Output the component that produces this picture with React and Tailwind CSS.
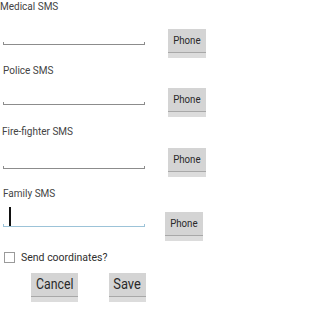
const font = { fontFamily: "Roboto, 'Noto Sans', sans-serif" };

const HoloButton = ({ label, className = "", textClass = "text-[10px]" }) => (
  <div className={`flex flex-col bg-[#d4d4d4] ${className}`}>
    <div className="flex flex-1 items-center justify-center">
      <span className={`inline-block text-[#2a2a2a] ${textClass}`}>{label}</span>
    </div>
    <div className="h-px bg-[#a8a8a8]" />
    <div className="h-[5px] bg-[#dcdcdc]" />
  </div>
);

const Underline = ({ focused }) => {
  const c = focused ? "bg-[#9cc3d8]" : "bg-[#8c8c8c]";
  return (
    <div className="flex h-[3px] w-[142px] items-end">
      <div className={`h-[3px] w-px ${c}`} />
      <div className={`h-px flex-1 ${c}`} />
      <div className={`h-[3px] w-px ${c}`} />
    </div>
  );
};

const Label = ({ children, className = "" }) => (
  <div className={`h-[14px] text-[10px] leading-[14px] text-[#444] ${className}`}>
    {children}
  </div>
);

export default function App() {
  return (
    <div className="h-[310px] w-[207px] overflow-hidden bg-white" style={font}>
      <Label className="pl-0">Medical SMS</Label>
      <div className="mt-[15px] flex h-[29px] items-start pl-[3px] pr-[1px]">
        <div className="mt-[13px]">
          <Underline />
        </div>
        <HoloButton label="Phone" className="ml-auto h-[29px] w-[38px]" textClass="text-[10.5px] scale-x-[0.92]" />
      </div>

      <Label className="mt-[6px] pl-[3px]">Police SMS</Label>
      <div className="mt-[10px] flex h-[29px] items-start pl-[3px] pr-[1px]">
        <div className="mt-[14px]">
          <Underline />
        </div>
        <HoloButton label="Phone" className="ml-auto h-[29px] w-[38px]" textClass="text-[10.5px] scale-x-[0.92]" />
      </div>

      <Label className="mt-[8px] pl-[2px]">Fire-fighter SMS</Label>
      <div className="mt-[9px] flex h-[29px] items-start pl-[3px] pr-[1px]">
        <div className="mt-[18px]">
          <Underline />
        </div>
        <HoloButton label="Phone" className="ml-auto h-[29px] w-[38px]" textClass="text-[10.5px] scale-x-[0.92]" />
      </div>

      <Label className="mt-[10px] pl-[3px]">Family SMS</Label>
      <div className="mt-[7px] flex h-[33px] items-start pl-[3px] pr-[4px]">
        <div className="relative mt-[16px]">
          <div className="absolute left-[6px] top-[-17px] h-[19px] w-[2px] bg-[#111]" />
          <Underline focused />
        </div>
        <HoloButton label="Phone" className="ml-auto mt-[4px] h-[29px] w-[38px]" textClass="text-[10.5px] scale-x-[0.92]" />
      </div>

      <div className="mt-[11px] flex items-center pl-[4px]">
        <div className="h-[11px] w-[11px] border border-[#9a9a9a] bg-white" />
        <span className="ml-[6px] text-[10.5px] leading-[11px] text-[#2e2e2e]">
          Send coordinates?
        </span>
      </div>

      <div className="mt-[10px] flex pl-[31px]">
        <HoloButton
          label="Cancel"
          className="h-[29px] w-[47px]"
          textClass="text-[15px] scale-x-[0.82]"
        />
        <HoloButton
          label="Save"
          className="ml-[31px] h-[29px] w-[37px]"
          textClass="text-[15px] scale-x-[0.86]"
        />
      </div>
    </div>
  );
}
